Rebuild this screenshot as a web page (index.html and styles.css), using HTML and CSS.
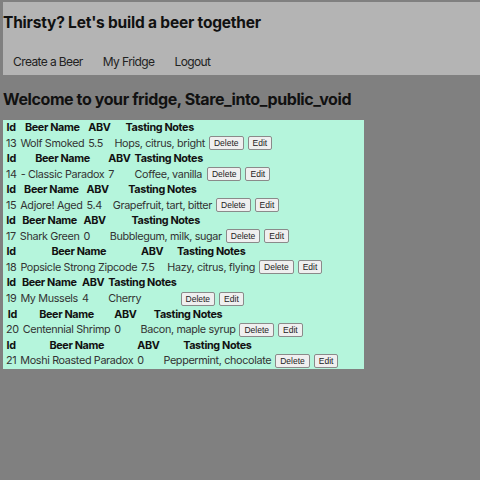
FILE: index.html
```html
<!DOCTYPE html>
<html>
<head>
<meta charset="utf-8">
<link rel="stylesheet" href="styles.css">
</head>
<body>
<header class="top">
  <h1 class="title">Thirsty? Let's build a beer together</h1>
  <nav class="nav">
    <a class="nav-link" href="#">Create a Beer</a>
    <a class="nav-link" href="#">My Fridge</a>
    <a class="nav-link" href="#">Logout</a>
  </nav>
</header>
<h2 class="welcome">Welcome to your fridge, Stare_into_public_void</h2>
<div class="fridge">
  <table class="beer"><tr><th>Id</th><th>Beer Name</th><th>ABV</th><th>Tasting Notes</th></tr>
  <tr><td>13</td><td>Wolf Smoked</td><td>5.5</td><td>Hops, citrus, bright</td><td><button class="btn">Delete</button></td><td><button class="btn">Edit</button></td></tr></table>
  <table class="beer"><tr><th>Id</th><th>Beer Name</th><th>ABV</th><th>Tasting Notes</th></tr>
  <tr><td>14</td><td>- Classic Paradox</td><td>7</td><td>Coffee, vanilla</td><td><button class="btn">Delete</button></td><td><button class="btn">Edit</button></td></tr></table>
  <table class="beer"><tr><th>Id</th><th>Beer Name</th><th>ABV</th><th>Tasting Notes</th></tr>
  <tr><td>15</td><td>Adjore! Aged</td><td>5.4</td><td>Grapefruit, tart, bitter</td><td><button class="btn">Delete</button></td><td><button class="btn">Edit</button></td></tr></table>
  <table class="beer"><tr><th>Id</th><th>Beer Name</th><th>ABV</th><th>Tasting Notes</th></tr>
  <tr><td>17</td><td>Shark Green</td><td>0</td><td>Bubblegum, milk, sugar</td><td><button class="btn">Delete</button></td><td><button class="btn">Edit</button></td></tr></table>
  <table class="beer"><tr><th>Id</th><th>Beer Name</th><th>ABV</th><th>Tasting Notes</th></tr>
  <tr><td>18</td><td>Popsicle Strong Zipcode</td><td>7.5</td><td>Hazy, citrus, flying</td><td><button class="btn">Delete</button></td><td><button class="btn">Edit</button></td></tr></table>
  <table class="beer"><tr><th>Id</th><th>Beer Name</th><th>ABV</th><th>Tasting Notes</th></tr>
  <tr><td>19</td><td>My Mussels</td><td>4</td><td>Cherry</td><td><button class="btn">Delete</button></td><td><button class="btn">Edit</button></td></tr></table>
  <table class="beer"><tr><th>Id</th><th>Beer Name</th><th>ABV</th><th>Tasting Notes</th></tr>
  <tr><td>20</td><td>Centennial Shrimp</td><td>0</td><td>Bacon, maple syrup</td><td><button class="btn">Delete</button></td><td><button class="btn">Edit</button></td></tr></table>
  <table class="beer"><tr><th>Id</th><th>Beer Name</th><th>ABV</th><th>Tasting Notes</th></tr>
  <tr><td>21</td><td>Moshi Roasted Paradox</td><td>0</td><td>Peppermint, chocolate</td><td><button class="btn">Delete</button></td><td><button class="btn">Edit</button></td></tr></table>
</div>
</body>
</html>
```

FILE: styles.css
```css
html, body {
  margin: 0;
  padding: 0;
}
body {
  background: #808080;
  font-family: Inter, "Liberation Sans", sans-serif;
  color: #111;
  padding: 2px 0 0 3px;
  height: 478px;
  overflow: hidden;
}
.top {
  background: #b4b4b4;
  height: 73px;
  display: flex;
  flex-direction: column;
}
.title {
  margin: 0;
  padding: 11px 0 0 0;
  font-size: 15.5px;
  letter-spacing: -0.2px;
  font-weight: 700;
  line-height: 20px;
}
.nav {
  display: flex;
  gap: 20px;
  padding: 21px 0 0 10px;
}
.nav-link {
  color: #222;
  text-decoration: none;
  font-size: 12px;
  letter-spacing: -0.6px;
  line-height: 16px;
}
.welcome {
  margin: 0;
  padding: 14px 0 0 0;
  font-size: 16px;
  letter-spacing: -0.4px;
  font-weight: 700;
  line-height: 20px;
  height: 45px;
  box-sizing: border-box;
}
.fridge {
  background: #b5f5dc;
  width: 361px;
}
.beer {
  border-spacing: 2px 0;
  font-size: 10.8px;
  letter-spacing: -0.35px;
  color: #333;
}
.beer th {
  color: #111;
  padding: 1px;
  line-height: 13.1px;
}
.beer td {
  padding: 1px;
  line-height: 13.1px;
  white-space: nowrap;
}
.btn {
  font-family: "Liberation Sans", Arial, sans-serif;
  font-size: 8.5px;
  letter-spacing: 0;
  line-height: 10px;
  padding: 1px 4px;
  border: 1px solid #8a8a8a;
  border-radius: 2px;
  background: #efefef;
  color: #222;
  margin: 0;
}
```
